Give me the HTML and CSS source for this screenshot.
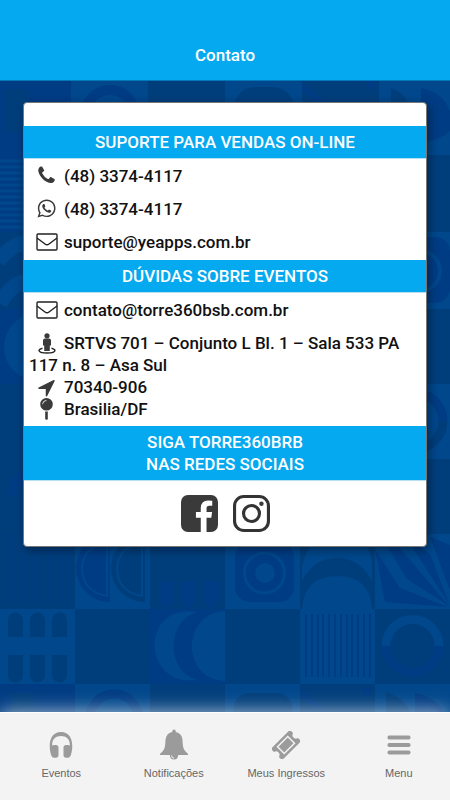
FILE: index.html
```html
<!DOCTYPE html>
<html lang="pt-BR">
<head>
<meta charset="utf-8">
<meta name="viewport" content="width=device-width, initial-scale=1">
<title>Contato</title>
<link rel="stylesheet" href="styles.css">
</head>
<body>
<header class="header"><h1 class="header-title">Contato</h1></header>

<main class="main">
  <svg class="pattern" viewBox="0 80 450 633" preserveAspectRatio="xMidYMin slice" aria-hidden="true">
    <rect y="80" width="450" height="633" fill="#003e7b"/>
    <!-- base tiles -->
    <g fill="#00478b">
      <path d="M71 80h77v74H71zM225 80h77v74h-77zM379 80h71v74h-71zM379 231h71v77h-71zM375 383h75v75h-75zM75 533h75v75H75zM225 533h225v75H225zM0 608h75v75H0zM225 608h150v75H225z"/>
      <path d="M300 608h75v75h-75zM75 683h75v30H75zM225 683h75v30h-75zM375 683h75v30h-75z"/>
    </g>
    <path fill="#003e7b" d="M225 608h75v75h-75zM300 533h75v75h-75z"/>
    <path fill="#003c83" d="M0 80h71v151H0zM0 308h75v75H0zM150 608h75v75h-75zM0 683h75v30H0z"/>
    <!-- top row -->
    <path fill="#003e7b" d="M6 88h19v43H6zM27 88h3v43h-3zM234 110q0-24 24-24h12q24 0 24 24v44h-60zM391 87q20 7 24 35v20h-24z"/>
    <circle cx="110" cy="114" r="25" fill="none" stroke="#003c83" stroke-width="10"/>
    <path fill="#003c83" d="M421 87q29 7 30 32v10q-12 11-30 12zM302 82l28 23h-9l-19-16zM366 80h11q0 9-5 9t-6-9z"/>
    <path fill="none" stroke="#00478b" stroke-width="3" d="M0 160h71M0 166h71M0 172h71M0 178h71M0 184h71M0 190h71M0 196h71M0 202h71M0 208h71M0 214h71M0 220h71M0 226h71"/>
    <!-- left column -->
    <g fill="none" stroke="#00478b" stroke-width="15">
      <path d="M-2 260q15-19 33-19M0 303q12-23 31-23"/>
    </g>
    <circle cx="38" cy="346" r="34" fill="#00478b"/>
    <path fill="#003c83" d="M7 495q2-20 18-28v13l-9 15z"/>
    <path fill="none" stroke="#003c83" stroke-width="2" d="M6 533v68M13 533v68M20 533v68M27 533v68M34 533v68M41 533v68M48 533v68M55 533v68M62 533v68M69 533v68"/>
    <!-- right column -->
    <rect x="387" y="236" width="63" height="66" rx="15" fill="#003c83"/>
    <circle cx="420" cy="270" r="20" fill="none" stroke="#00478b" stroke-width="4"/>
    <g fill="none" stroke-width="9">
      <path stroke="#003c83" d="M387 420a28 28 0 0 1 56 0"/><path stroke="#003e7b" d="M387 420a28 28 0 0 0 56 0"/>
    </g>
    <!-- row under the card -->
    <path fill="#003c83" d="M110 533v68a34 34 0 0 1 0-68zM159 533h15v28h-15zM182 533h14v28h-14zM204 533h15v28h-15zM159 580h15v19q-7 16-15 0zM182 580h14v19q-7 16-14 0zM204 580h15v19q-8 16-15 0z"/>
    <path fill="#003e7b" d="M145 533v68a34 34 0 0 1 0-68zM159 550h60v11h-60z"/>
    <g fill="none" stroke="#00478b" stroke-width="2"><path d="M107 541v54q-24-4-25-27 1-22 25-27zM142 541v54q-24-4-25-27 1-22 25-27z"/></g>
    <rect x="235" y="541" width="59" height="60" rx="15" fill="#003c83"/>
    <circle cx="264.500" cy="572" r="20" fill="none" stroke="#00478b" stroke-width="3"/>
    <circle cx="265" cy="572" r="10" fill="#00478b"/>
    <path fill="#00478b" d="M302 580v-15q5-21 20-32h32q18 12 18 32v15q-12-23-35-23t-35 23zM302 608q2-33 35-33t35 33z"/>
    <path fill="#003c83" d="M375 548l25 39 48 19-63-5zM384 540l15 6 50 59-42-27zM405 535l25 18 19 50zM430 536l20 8v45z"/>
    <!-- lower row -->
    <path fill="#003e7b" d="M8 636v-17a7 7 0 0 1 15 0v17zM30 636v-17a7 7 0 0 1 15 0v17zM52 636v-17a7 7 0 0 1 15 0v17zM8 654h15v20a7 7 0 0 1-15 0zM30 654h15v20a7 7 0 0 1-15 0zM52 654h15v20a7 7 0 0 1-15 0z"/>
    <path fill="#00478b" d="M197 611c-31 9-31 59 0 68-55 8-58-77 0-68zM225 610c-44 2-44 69 0 70z"/>
    <path fill="none" stroke="#003c83" stroke-width="2" d="M306 613v63M312 613v63M318 613v63M323 613v63M329 613v63M335 613v63M341 613v63M347 613v63M352 613v63M358 613v63M364 613v63M370 613v63"/>
    <g fill="none" stroke-width="9">
      <path stroke="#00478b" d="M386 645a26 26 0 0 1 53 0"/><path stroke="#003c83" d="M386 645a26 26 0 0 0 53 0"/>
    </g>
    <path fill="none" stroke="#003c83" stroke-width="9" d="M88 719q6-26 26-26t26 26"/>
    <path fill="#003e7b" d="M12 692h20v21H12zM34 692h2v21h-2zM233 713q0-21 18-21h24q18 0 18 21zM300 683h75v30h-75zM386 692q18 3 25 21h-25z"/>
    <path fill="#003c83" d="M300 687l25 22h-10l-15-14zM415 692q20 3 30 21h-30z"/><circle cx="367" cy="690" r="5" fill="#003c83"/>
  </svg>

  <article class="card">
    <section>
      <h2 class="bar">SUPORTE PARA VENDAS ON-LINE</h2>
      <div class="rows">
        <a class="row" href="tel:+554833744117"><span class="icon"><svg width="21" height="21" viewBox="0 0 1792 1792"><path d="M1600 1240q0 27-10 70.500t-21 68.500q-21 50-122 106-94 51-186 51-27 0-53-3.500t-57-12.500-47-14.500-55.500-20.500-49.500-18q-98-35-175-83-127-79-264-216t-216-264q-48-77-83-175-3-9-18-49.500t-20.500-55.500-14.500-47-12.500-57-3.500-53q0-92 51-186 56-101 106-122 25-11 68.500-21t70.500-10q14 0 21 3 18 6 53 76 11 19 30 54t35 63.500 31 53.500q3 4 17.500 25t21.500 35.500 7 28.500q0 20-28.500 50t-62 55-62 53-28.500 46q0 9 5 22.500t8.500 20.500 14 24 11.500 19q76 137 174 235t235 174q2 1 19 11.500t24 14 20.500 8.500 22.500 5q18 0 46-28.500t53-62 55-62 50-28.500q14 0 28.500 7t35.500 21.500 25 17.500q25 15 53.500 31t63.500 35 54 30q70 35 76 53 3 7 3 21z"/></svg></span>(48) 3374-4117</a>
        <a class="row" href="https://wa.me/554833744117"><span class="icon"><svg width="21" height="21" viewBox="0 0 1792 1792"><path d="M1113 974q13 0 97.500 44t89.500 53q2 5 2 15 0 33-17 76-16 39-71 65.500t-102 26.500q-57 0-190-62-98-45-170-118t-148-185q-72-107-71-194v-8q3-91 74-158 24-22 52-22 6 0 18 1.500t19 1.500q19 0 26.500 6.500t15.500 27.500q8 20 33 88t25 75q0 21-34.500 57.500t-34.500 46.500q0 7 5 15 34 73 102 137 56 53 151 101 12 7 22 7 15 0 54-48.500t52-48.500zm-203 530q127 0 243.500-50t200.500-134 134-200.500 50-243.500-50-243.500-134-200.500-200.500-134-243.500-50-243.500 50-200.500 134-134 200.500-50 243.500q0 203 120 368l-79 233 242-77q158 104 345 104zm0-1382q153 0 292.500 60t240.500 161 161 240.500 60 292.500-60 292.500-161 240.500-240.500 161-292.500 60q-195 0-365-94l-417 134 136-405q-108-178-108-389 0-153 60-292.500t161-240.500 240.500-161 292.500-60z"/></svg></span>(48) 3374-4117</a>
        <a class="row" href="mailto:suporte@yeapps.com.br"><span class="icon"><svg width="22" height="18" viewBox="0 0 22 18"><g class="line"><rect x="1" y="1" width="20" height="16" rx="1"/><path d="M1 5l8 6q2 1.500 4 0l8-6"/></g></svg></span>suporte@yeapps.com.br</a>
      </div>
    </section>
    <section>
      <h2 class="bar">DÚVIDAS SOBRE EVENTOS</h2>
      <div class="rows">
        <a class="row" href="mailto:contato@torre360bsb.com.br"><span class="icon"><svg width="22" height="18" viewBox="0 0 22 18"><g class="line"><rect x="1" y="1" width="20" height="16" rx="1"/><path d="M1 5l8 6q2 1.500 4 0l8-6"/></g></svg></span>contato@torre360bsb.com.br</a>
      </div>
      <address class="address">
        <span class="icon"><svg width="18" height="21" viewBox="0 0 18 21"><circle cx="9" cy="2.800" r="2.600"/><path d="M7 5.500h4q2 0 2 2v5h-1.200V18H6.200v-5.500H5v-5q0-2 2-2z"/><path class="line" d="M4.500 15.200C-1 16.500 0 20 9 20s10-3.500 4.500-4.800"/></svg></span>SRTVS 701 – Conjunto L Bl. 1 – Sala 533 PA 117 n. 8 – Asa Sul<br>
        <span class="icon"><svg width="21" height="21" viewBox="0 0 1792 1792"><path d="M1593 349l-640 1280q-17 35-57 35-5 0-15-2-22-5-35.500-22.500t-13.500-39.500v-576h-576q-22 0-39.500-13.500t-22.500-35.500 4-42 29-30l1280-640q13-7 29-7 27 0 45 19 15 14 18.500 34.500t-6.500 39.500z"/></svg></span>70340-906<br>
        <span class="icon"><svg width="13" height="22" viewBox="0 0 13 22"><path d="M6.500 0a6.300 6.300 0 1 1 0 12.600 6.300 6.300 0 0 1 0-12.600zm0 2.200Q2.500 2.500 2.300 6.300h.7Q3.300 3.200 6.500 2.900z" fill-rule="evenodd"/><path d="M5.200 13.600h2.600V21q0 .8-1.300.8T5.200 21z"/></svg></span>Brasilia/DF
      </address>
    </section>
    <section>
      <h2 class="bar">SIGA TORRE360BRB<br>NAS REDES SOCIAIS</h2>
      <div class="social">
        <a href="#facebook" aria-label="Facebook"><svg width="37" height="37" viewBox="128 128 1536 1536"><path d="M1376 128q119 0 203.500 84.500t84.500 203.500v960q0 119-84.500 203.500t-203.500 84.500h-188v-595h199l30-232h-229v-148q0-56 23.500-84t91.500-28l122-1v-207q-63-9-178-9-136 0-217.500 80t-81.500 226v171h-200v232h200v595h-532q-119 0-203.500-84.500t-84.500-203.500v-960q0-119 84.500-203.500t203.500-84.500h960z"/></svg></a>
        <a href="#instagram" aria-label="Instagram"><svg width="37" height="37" viewBox="0 0 38 38"><rect x="1.600" y="1.600" width="34.800" height="34.800" rx="9.500" fill="none" stroke="#333" stroke-width="3.200"/><circle cx="19" cy="19" r="8.200" fill="none" stroke="#333" stroke-width="3.200"/><circle cx="29.200" cy="8.900" r="2.300"/></svg></a>
      </div>
    </section>
  </article>
</main>

<nav class="tabs">
  <a class="tab" href="#eventos"><svg width="24" height="28" viewBox="0 0 24 28"><path d="M2.300 24.500C-1 15 .3 1 12 1s13 14 9.700 23.500q-.8 2.300-2.800 2.300h-1.700q-2.700 0-2.700-2.700v-7.400q0-2.700 2.700-2.700h1.700q1.200 0 1.900.8C21.200 8.500 17.500 5 12 5S2.800 8.500 3.200 14.800q.7-.8 1.900-.8h1.700q2.700 0 2.700 2.700v7.400q0 2.700-2.700 2.700H5.100q-2 0-2.800-2.300z"/></svg>Eventos</a>
  <a class="tab" href="#notificacoes"><svg width="28" height="32" viewBox="0 0 28 32"><path d="M14 .5q1.700 0 1.900 2.400Q22 4.300 22.500 11q.2 7.500 1.700 9.800 1.600 2.400 3.500 3.600 1 1.600-.7 1.600H18.200q-.3 4.600-4.200 4.600T9.800 26H1q-1.700 0-.7-1.600 1.900-1.200 3.500-3.600Q5.300 18.500 5.500 11 6 4.300 12.100 2.900 12.300.5 14 .5z"/><path d="M11.500 26.500q.3 2.500 2.500 2.700" fill="none" stroke="#f3f3f3"/></svg>Notificações</a>
  <a class="tab" href="#ingressos"><svg width="28" height="28" viewBox="1 1 28 28"><g transform="rotate(-45 15 15)"><path fill-rule="evenodd" d="M3.500 7h23q2 0 2 2v2.500q-3 .8-3 3.500t3 3.500V21q0 2-2 2h-23q-2 0-2-2v-2.500q3-.8 3-3.500t-3-3.500V9q0-2 2-2zM7 9.500v11h16v-11zm1.500 1.500h13v8h-13z"/></g></svg>Meus Ingressos</a>
  <a class="tab" href="#menu"><svg width="24" height="22" viewBox="0 0 24 22"><rect x=".5" y="1.500" width="23" height="4" rx="1.700"/><rect x=".5" y="9" width="23" height="4" rx="1.700"/><rect x=".5" y="16.500" width="23" height="4" rx="1.700"/></svg>Menu</a>
</nav>
</body>
</html>
```
FILE: styles.css
```css
* { box-sizing: border-box; }

body {
  margin: 0;
  min-height: 100vh;
  display: flex;
  flex-direction: column;
  background: #003e7b;
  color: #111;
  font: 500 17px/22px Roboto, "Liberation Sans", sans-serif;
}

a { color: inherit; text-decoration: none; }
h1, h2 { margin: 0; font-size: 17px; font-weight: 500; text-align: center; }

.header {
  padding: 44px 16px 14px;
  background: #05a9ef;
  color: #fff;
}

.main {
  position: relative;
  flex: 1;
  padding: 21px 23px;
  border-top: 1px solid #0377b8;
}

.pattern {
  position: absolute;
  inset: 0;
  width: 100%;
  height: 100%;
}

.card {
  position: relative;
  padding-top: 23px;
  background: #fff;
  border: 1px solid #777;
  border-radius: 4px;
  box-shadow: 2px 3px 10px rgba(0, 0, 0, 0.4);
}

.bar {
  padding: 5px;
  background: #05a9ef;
  color: #fff;
  box-shadow: 0 1px #b9dff5;
}

.rows { padding: 1px 5px 2px; }
.row { display: flex; align-items: center; height: 33px; }

.icon {
  display: inline-flex;
  flex: none;
  align-items: center;
  justify-content: center;
  width: 35px;
  height: 22px;
  vertical-align: top;
}

svg { display: block; flex: none; }
.icon svg, .social svg { fill: #3a3a3a; }
.icon .line { fill: none; stroke: #222; stroke-width: 1.4; }

.address { padding: 4px 5px 6px; font-style: normal; }

.social {
  display: flex;
  justify-content: center;
  gap: 15px;
  padding: 15px 0 14px;
}

.tabs {
  position: relative;
  display: flex;
  height: 88px;
  background: #f3f3f3;
  border-top: 1px solid #fff;
  box-shadow: 0 0 18px rgba(255, 255, 255, 0.7);
}

.tab {
  flex: 1;
  display: grid;
  grid-template-rows: 32px 16px;
  gap: 4px;
  place-items: center;
  align-content: start;
  padding: 16px 0 0 10px;
  color: #666;
  font: 11px/16px "Liberation Sans", Arial, sans-serif;
}

.tab svg { fill: #9b9b9b; }
```
